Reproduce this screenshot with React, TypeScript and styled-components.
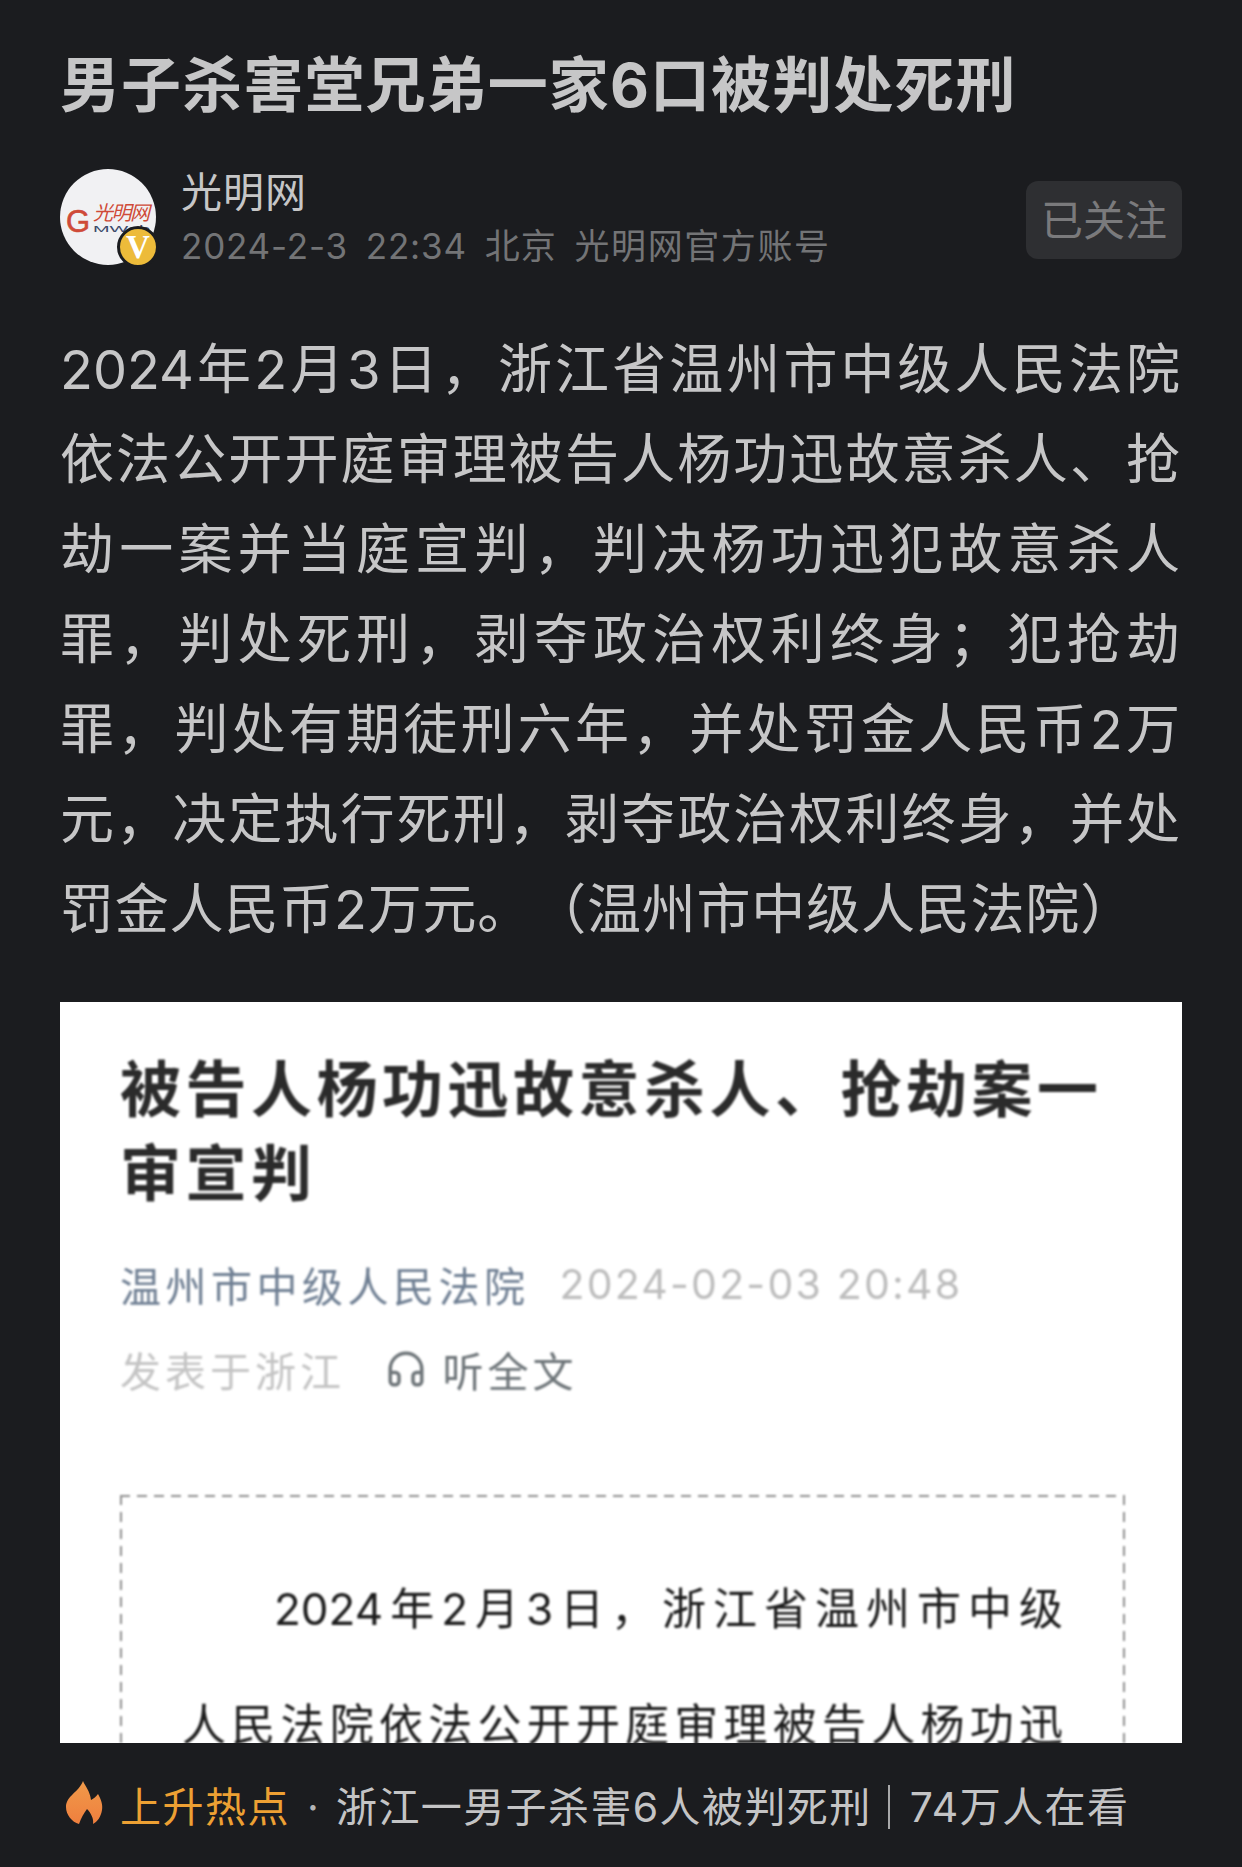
import React from 'react';
import styled, { createGlobalStyle } from 'styled-components';
import { Headphones } from 'lucide-react';

const GlobalStyle = createGlobalStyle`
  html, body {
    margin: 0;
    padding: 0;
    background: #1b1c1f;
  }
  * {
    box-sizing: border-box;
  }
`

const Page = styled.div`
  width: 1242px;
  height: 1867px;
  overflow: hidden;
  display: flex;
  flex-direction: column;
  padding: 43px 60px 0;
  background: #1b1c1f;
  font-family: Inter, "Noto Sans CJK SC", sans-serif;
  text-spacing-trim: space-all;
`

const Title = styled.h1`
  margin: 0;
  height: 84px;
  font-size: 60px;
  line-height: 84px;
  font-weight: 700;
  letter-spacing: 1.1px;
  color: #c6c6c7;
  white-space: nowrap;
`

const AuthorRow = styled.div`
  display: flex;
  align-items: center;
  margin-top: 42px;
  height: 96px;
`

const Avatar = styled.div`
  position: relative;
  flex: none;
  width: 96px;
  height: 96px;
  border-radius: 50%;
  background: #f1f1f3;
`

const Badge = styled.div`
  position: absolute;
  right: -3px;
  bottom: -3px;
  width: 42px;
  height: 42px;
  border-radius: 50%;
  border: 3px solid #1b1c1f;
  background: #edbb3a;
  color: #fff;
  display: flex;
  align-items: center;
  justify-content: center;
  font-family: "Liberation Serif", serif;
  font-size: 33px;
  font-weight: 700;
`

const AuthorInfo = styled.div`
  flex: 1;
  margin-left: 25px;
  margin-top: 3px;
  display: flex;
  flex-direction: column;
  gap: 6px;
`

const AuthorName = styled.div`
  font-size: 41px;
  line-height: 48px;
  letter-spacing: 1px;
  color: #c6c6c7;
`

const AuthorMeta = styled.div`
  display: flex;
  gap: 18px;
  font-size: 35px;
  line-height: 48px;
  letter-spacing: 0.8px;
  color: #737476;
  white-space: nowrap;
`

const MetaAccount = styled.span`
  letter-spacing: 1.6px;
`

const FollowButton = styled.div`
  width: 156px;
  height: 78px;
  margin-top: 5px;
  padding-bottom: 4px;
  border-radius: 12px;
  background: #2e2f32;
  color: #7a7a7c;
  font-size: 42px;
  display: flex;
  align-items: center;
  justify-content: center;
`

const Body = styled.div`
  margin-top: 60px;
  padding-right: 2px;
`

const BodyLine = styled.div<{ $last?: boolean }>`
  height: 90px;
  font-size: 54px;
  line-height: 90px;
  color: #c6c6c7;
  letter-spacing: ${props => (props.$last ? '0.8px' : '0')};
  text-align: justify;
  text-align-last: ${props => (props.$last ? 'left' : 'justify')};
`

const Shot = styled.div`
  margin-top: 47px;
  height: 741px;
  overflow: hidden;
  background: #fff;
  padding: 46px 60px 0;
`

const ShotInner = styled.div`
  filter: blur(0.8px);
`

const ShotTitle = styled.div`
  font-size: 61px;
  line-height: 84px;
  font-weight: 700;
  letter-spacing: 4.5px;
  color: #2b2b2b;
`

const ShotMetaRow = styled.div<{ $top: number }>`
  display: flex;
  align-items: center;
  margin-top: ${props => props.$top}px;
  height: 60px;
  font-size: 41px;
  white-space: nowrap;
`

const MetaText = styled.span<{ $color: string; $gap?: number; $spacing?: number }>`
  color: ${props => props.$color};
  margin-right: ${props => props.$gap || 0}px;
  letter-spacing: ${props => props.$spacing ?? 4}px;
  display: inline-flex;
  align-items: center;
`

const DashedBox = styled.div`
  margin-top: 96px;
  width: 1005px;
  height: 400px;
  background:
    linear-gradient(to right, #8f8f8f 10px, transparent 10px) top left / 17px 2px repeat-x,
    linear-gradient(to bottom, #8f8f8f 10px, transparent 10px) top left / 2px 17px repeat-y,
    linear-gradient(to bottom, #8f8f8f 10px, transparent 10px) top right / 2px 17px repeat-y;
  padding: 56px 62px 0;
`

const ParaLine = styled.div<{ $indent?: number }>`
  height: 116px;
  padding-left: ${props => props.$indent || 0}px;
  font-size: 44px;
  line-height: 116px;
  color: #1c1c1c;
  text-align: justify;
  text-align-last: justify;
`

const Footer = styled.div`
  flex: 1;
  display: flex;
  align-items: flex-start;
  margin-left: 6px;
  padding-top: 38px;
  font-size: 41px;
  line-height: 52px;
  white-space: nowrap;
`

const HotLabel = styled.span`
  color: #eda033;
  margin-left: 17px;
  letter-spacing: 1.5px;
`

const Dot = styled.span`
  color: #b4b4b5;
  width: 46px;
  text-align: center;
`

const HotText = styled.span`
  color: #c4c4c5;
  letter-spacing: 1.4px;
`

const Divider = styled.span`
  width: 2px;
  height: 44px;
  margin: 4px 20px 0 16px;
  background: #a8a8a9;
`

const GmwLogo = () => (
  <svg width="96" height="96" viewBox="0 0 96 96">
    <text x="6" y="63" fontFamily="Liberation Sans, sans-serif" fontSize="31" fill="#cf4a38" stroke="#cf4a38" strokeWidth="0.6">G</text>
    <text x="33" y="51" fontFamily="Noto Sans CJK SC, sans-serif" fontSize="20" fontStyle="italic" fill="#cf4a38" textLength="57">光明网</text>
    <text x="33" y="63" fontFamily="Liberation Sans, sans-serif" fontSize="9" fill="#3c4a6b" textLength="57" lengthAdjust="spacingAndGlyphs">MWeb</text>
  </svg>
)

const FlameIcon = () => (
  <svg width="37" height="44" viewBox="0 0 37 44">
    <defs>
      <linearGradient id="flame" x1="0" y1="0" x2="0" y2="1">
        <stop offset="0" stopColor="#f09a4a" />
        <stop offset="1" stopColor="#ef7f3e" />
      </linearGradient>
    </defs>
    <path
      d="M17 0C19 5 24 10 25 19C27 18 30 16 32 13C35 18 37 24 36 29C35 36 31 41 27 43C28 38 25 32 21 28C18 32 15 37 13 43C6 41 0 34 0 26C0 15 13 11 17 0Z"
      fill="url(#flame)"
    />
  </svg>
)

const App: React.FC = () => {
  return (
    <Page>
      <GlobalStyle />
      <Title>男子杀害堂兄弟一家6口被判处死刑</Title>
      <AuthorRow>
        <Avatar>
          <GmwLogo />
          <Badge>V</Badge>
        </Avatar>
        <AuthorInfo>
          <AuthorName>光明网</AuthorName>
          <AuthorMeta>
            <span>2024-2-3</span>
            <span>22:34</span>
            <span>北京</span>
            <MetaAccount>光明网官方账号</MetaAccount>
          </AuthorMeta>
        </AuthorInfo>
        <FollowButton>已关注</FollowButton>
      </AuthorRow>
      <Body>
        <BodyLine>2024年2月3日，浙江省温州市中级人民法院</BodyLine>
        <BodyLine>依法公开开庭审理被告人杨功迅故意杀人、抢</BodyLine>
        <BodyLine>劫一案并当庭宣判，判决杨功迅犯故意杀人</BodyLine>
        <BodyLine>罪，判处死刑，剥夺政治权利终身；犯抢劫</BodyLine>
        <BodyLine>罪，判处有期徒刑六年，并处罚金人民币2万</BodyLine>
        <BodyLine>元，决定执行死刑，剥夺政治权利终身，并处</BodyLine>
        <BodyLine $last>罚金人民币2万元。（温州市中级人民法院）</BodyLine>
      </Body>
      <Shot>
        <ShotInner>
          <ShotTitle>被告人杨功迅故意杀人、抢劫案一审宣判</ShotTitle>
          <ShotMetaRow $top={38}>
            <MetaText $color="#6f7f93" $gap={30} $spacing={4.5}>温州市中级人民法院</MetaText>
            <MetaText $color="#bdbdbd" $spacing={2.2}>2024-02-03 20:48</MetaText>
          </ShotMetaRow>
          <ShotMetaRow $top={25}>
            <MetaText $color="#c4c4c4" $gap={40}>发表于浙江</MetaText>
            <MetaText $color="#6d7478">
              <Headphones size={42} strokeWidth={2} />
              &nbsp;听全文
            </MetaText>
          </ShotMetaRow>
          <DashedBox>
            <ParaLine $indent={92}>2024年2月3日，浙江省温州市中级</ParaLine>
            <ParaLine>人民法院依法公开开庭审理被告人杨功迅</ParaLine>
          </DashedBox>
        </ShotInner>
      </Shot>
      <Footer>
        <FlameIcon />
        <HotLabel>上升热点</HotLabel>
        <Dot>·</Dot>
        <HotText>浙江一男子杀害6人被判死刑</HotText>
        <Divider />
        <HotText>74万人在看</HotText>
      </Footer>
    </Page>
  )
}

export default App;
